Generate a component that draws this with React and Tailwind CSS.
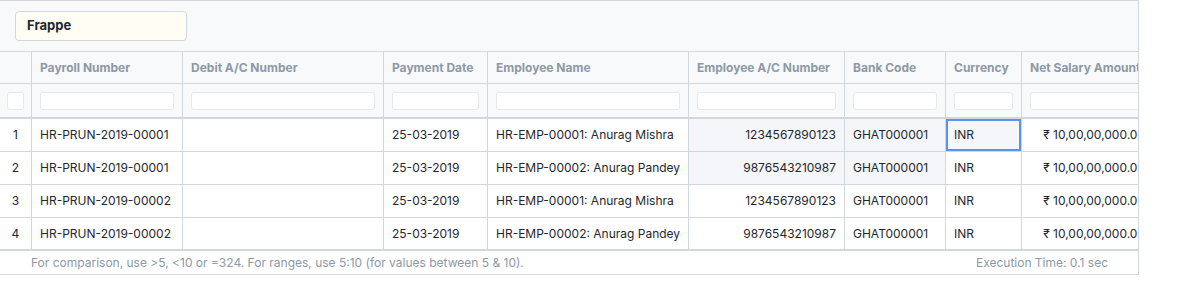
import React from 'react';

const cols = [
  { key: 'payroll', label: 'Payroll Number', w: 'w-[151px]' },
  { key: 'debit', label: 'Debit A/C Number', w: 'w-[201px]' },
  { key: 'date', label: 'Payment Date', w: 'w-[104px]' },
  { key: 'emp', label: 'Employee Name', w: 'w-[201px]' },
  { key: 'acc', label: 'Employee A/C Number', w: 'w-[156px]', right: true },
  { key: 'bank', label: 'Bank Code', w: 'w-[101px]' },
  { key: 'cur', label: 'Currency', w: 'w-[76px]' },
  { key: 'amt', label: 'Net Salary Amount', w: 'w-[132px]', right: true },
];

const rows = [
  { payroll: 'HR-PRUN-2019-00001', debit: '', date: '25-03-2019', emp: 'HR-EMP-00001: Anurag Mishra', acc: '1234567890123', bank: 'GHAT000001', cur: 'INR', amt: '₹ 10,00,00,000.00' },
  { payroll: 'HR-PRUN-2019-00001', debit: '', date: '25-03-2019', emp: 'HR-EMP-00002: Anurag Pandey', acc: '9876543210987', bank: 'GHAT000001', cur: 'INR', amt: '₹ 10,00,00,000.00' },
  { payroll: 'HR-PRUN-2019-00002', debit: '', date: '25-03-2019', emp: 'HR-EMP-00001: Anurag Mishra', acc: '1234567890123', bank: 'GHAT000001', cur: 'INR', amt: '₹ 10,00,00,000.00' },
  { payroll: 'HR-PRUN-2019-00002', debit: '', date: '25-03-2019', emp: 'HR-EMP-00002: Anurag Pandey', acc: '9876543210987', bank: 'GHAT000001', cur: 'INR', amt: '₹ 10,00,00,000.00' },
];

// selected range: row 0 acc..cur, row 1 acc..bank; focused cell row 0 cur
const isSelected = (r, key) =>
  (r === 0 && ['acc', 'bank', 'cur'].includes(key)) || (r === 1 && ['acc', 'bank'].includes(key));

export default function App() {
  return (
    <div className="w-[1178px] h-[300px] bg-white text-[#1f272e]" style={{ fontFamily: 'Inter, "Noto Sans", sans-serif' }}>
      <div className="w-[1139px] border-t border-r border-[#d1d8dd] overflow-hidden">
        {/* toolbar */}
        <div className="h-[50px] bg-[#f7f9fb] pl-[15px] pt-[10px]">
          <div className="w-[172px] h-[30px] bg-[#fffdf4] border border-[#d1d8dd] rounded-[4px] flex items-center px-[11px] text-[13px] font-bold text-[#1f272e]">
            Frappe
          </div>
        </div>

        {/* header */}
        <div className="flex h-[33px] bg-[#f7f9fb] border-t border-b border-[#d1d8dd] text-[12px] font-bold text-[#8d99a6]">
          <div className="w-[32px] shrink-0 border-r border-[#d1d8dd]" />
          {cols.map((c) => (
            <div key={c.key} className={`${c.w} shrink-0 border-r border-[#d1d8dd] px-[8px] flex items-center whitespace-nowrap overflow-hidden`}>
              {c.label}
            </div>
          ))}
        </div>

        {/* filter row */}
        <div className="flex h-[35px] bg-[#f7f9fb] border-b-2 border-[#d1d8dd]">
          <div className="w-[32px] shrink-0 border-r border-[#d1d8dd] flex items-center pl-[7px]">
            <div className="w-[17px] h-[18px] bg-white border border-[#e6e9ec] rounded-[3px]" />
          </div>
          {cols.map((c) => (
            <div key={c.key} className={`${c.w} shrink-0 border-r border-[#d1d8dd] px-[8px] flex items-center`}>
              <div className="w-full h-[18px] bg-white border border-[#e6e9ec] rounded-[3px]" />
            </div>
          ))}
        </div>

        {/* body */}
        {rows.map((row, i) => (
          <div
            key={i}
            className={`flex h-[33px] text-[12px] ${i === rows.length - 1 ? 'border-b-2' : 'border-b'} border-[#d1d8dd]`}
          >
            <div className="w-[32px] shrink-0 border-r border-[#d1d8dd] flex items-center justify-center">{i + 1}</div>
            {cols.map((c) => {
              const focused = i === 0 && c.key === 'cur';
              return (
                <div
                  key={c.key}
                  className={`${c.w} shrink-0 border-r border-[#d1d8dd] relative flex items-center px-[8px] whitespace-nowrap overflow-hidden ${
                    c.right ? 'justify-end' : ''
                  } ${isSelected(i, c.key) ? 'bg-[#f4f6f9]' : 'bg-white'}`}
                >
                  {row[c.key]}
                  {focused && <div className="absolute inset-0 border-2 border-[#5a93ee]" />}
                </div>
              );
            })}
          </div>
        ))}

        {/* footer */}
        <div className="h-[24px] flex items-center justify-between pl-[31px] pr-[30px] text-[12px] text-[#8d99a6] border-b border-[#d1d8dd]">
          <span>For comparison, use &gt;5, &lt;10 or =324. For ranges, use 5:10 (for values between 5 &amp; 10).</span>
          <span>Execution Time: 0.1 sec</span>
        </div>
      </div>
    </div>
  );
}
